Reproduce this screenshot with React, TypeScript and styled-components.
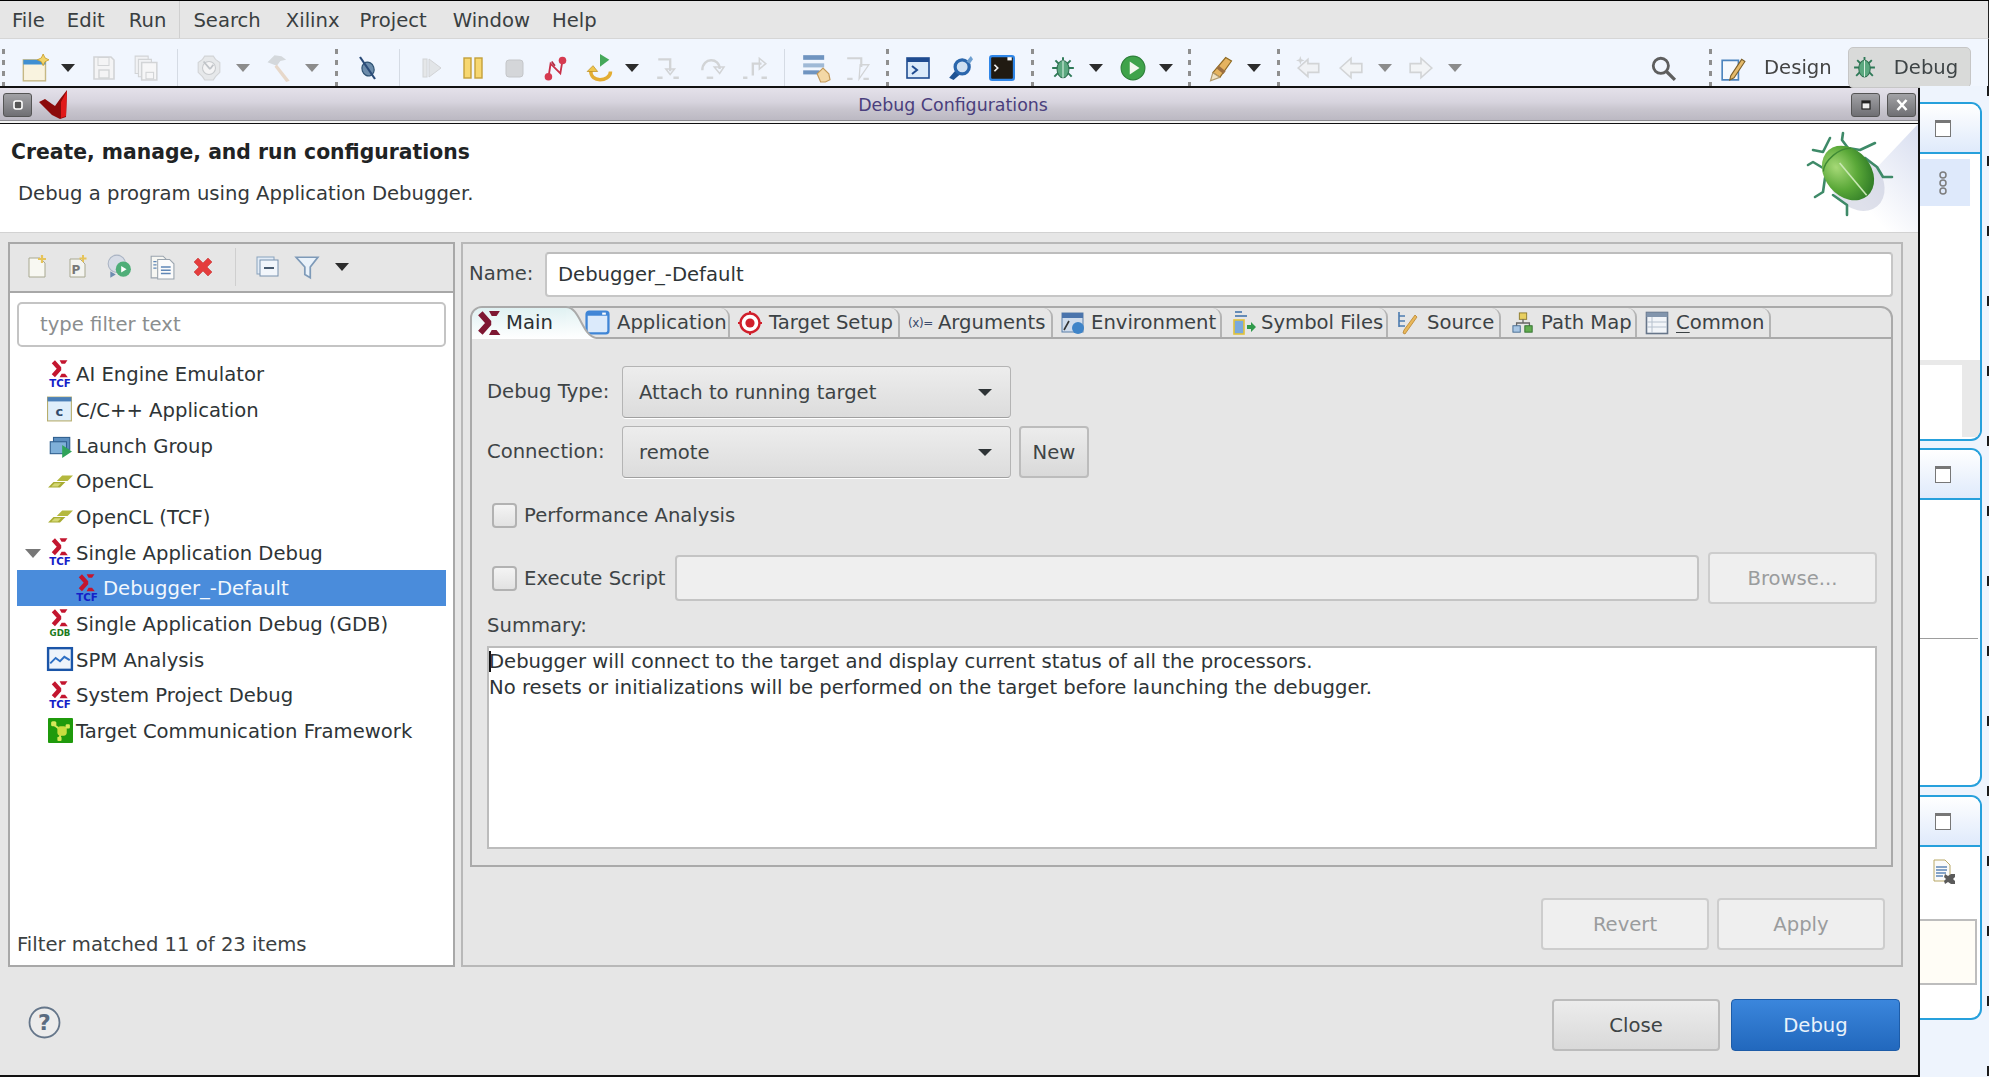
import React from "react";
import styled, { createGlobalStyle } from "styled-components";

const Global = createGlobalStyle`
  html, body { margin: 0; padding: 0; background: #eef4fd; overflow: hidden; }
  #root { width: 1989px; height: 1077px; }
  * { box-sizing: border-box; }
`;

const Page = styled.div`
  width: 1989px; height: 1077px; display: flex; flex-direction: column;
  font-family: "DejaVu Sans", sans-serif; font-size: 19.62px; color: #2e3436;
  border-top: 1px solid #000; overflow: hidden; filter: blur(0.35px);
`;
const MenuBar = styled.div`
  height: 38px; background: #e6e6e6; border-bottom: 1px solid #d6d6d6; padding-top: 2px;
  display: flex; align-items: center; flex: none; border-right: 1px solid #222;
`;
const MenuItem = styled.span<{ $ml: number }>`
  margin-left: ${p => p.$ml}px; color: #3a3f41; white-space: nowrap;
`;
const MenuDivider = styled.div`
  width: 1px; align-self: stretch; background: #d0d0d0; margin-left: 13px; margin-top: -2px;
`;
const ToolBar = styled.div`
  height: 47px; flex: none; background: #f1f6fe; display: flex; align-items: stretch;
  padding-top: 10px; position: relative; border-right: 1px solid #222;
`;
const ToolSlot = styled.div<{ $ml: number; $w: number }>`
  margin-left: ${p => p.$ml}px; width: ${p => p.$w}px; flex: none;
  display: flex; align-items: center; justify-content: center;
`;
const DashSep = styled.div`
  width: 3px; height: 100%;
  background: repeating-linear-gradient(to bottom, #8f8f8f 0 5px, transparent 5px 11px);
`;
const SolidSep = styled.div`
  width: 1px; height: 100%; background: #d5dbe4;
`;
const Arrow = styled.div<{ $light?: boolean }>`
  width: 0; height: 0; border-left: 7px solid transparent; border-right: 7px solid transparent;
  border-top: 8px solid ${p => (p.$light ? "#8c8c8c" : "#2c2c2c")};
`;
const PerspectiveText = styled.span`
  color: #444; margin-left: 18px; white-space: nowrap; align-self: center;
`;
const PerspectiveBtn = styled.div`
  height: 41px; width: 123px; margin-left: 16px; margin-top: -2px; flex: none;
  background: #d9dad9; border: 1px solid #c6c6c6; border-radius: 5px;
  display: flex; align-items: center; padding-left: 3px; color: #3e4446;
  gap: 17px;
`;
const Body = styled.div`
  flex: 1; display: flex; min-height: 0;
`;
const Dialog = styled.div`
  width: 1920px; height: 991px; flex: none; background: #e6e6e6; display: flex; flex-direction: column;
  border-top: 2px solid #111; border-right: 2px solid #111; border-bottom: 2px solid #111;
`;
const TitleBar = styled.div`
  height: 36px; flex: none; display: flex; align-items: center;
  background: linear-gradient(to bottom, #e4e1ea 0, #d7d4de 40%, #c9c6cf 60%, #bcb9c3 90%, #8e8d92 91%, #8e8d92 94%, #f4f4f4 94%, #f4f4f4 100%);
  border-bottom: 1px solid #111; padding: 0 2px 2px 3px;
`;
const WinBtn = styled.div`
  width: 29px; height: 24px; flex: none; border: 1px solid #555; border-radius: 3px;
  background: linear-gradient(to bottom, #a2a2a6, #6f6f73); display: flex; align-items: center; justify-content: center;
`;
const WinTitle = styled.div`
  flex: 1; text-align: center; color: #4a3f7d; font-size: 17.4px; margin-left: -41px; margin-right: -27px;
`;
const HeaderArea = styled.div`
  height: 109px; flex: none; background: #fff; border-bottom: 1px solid #d2d2d2; display: flex;
`;
const HeaderText = styled.div`
  flex: 1; display: flex; flex-direction: column; padding: 15px 0 0 11px;
`;
const HeaderTitle = styled.div`
  font-weight: bold; font-size: 20.35px; color: #1f2324; line-height: 26px; white-space: nowrap;
`;
const HeaderSub = styled.div`
  margin: 16px 0 0 7px; line-height: 26px; color: #33383a; white-space: nowrap;
`;
const Main = styled.div`
  flex: none; display: flex; gap: 6px; padding: 9px 15px 0 8px;
`;
const Sidebar = styled.div`
  width: 447px; height: 725px; flex: none; background: #fff; border: 2px solid #a8a8a8; display: flex; flex-direction: column;
`;
const SideTools = styled.div`
  height: 49px; flex: none; background: #e6e6e6; border-bottom: 2px solid #a8a8a8; display: flex; align-items: center; padding-bottom: 1px;
`;
const SideSep = styled.div`
  width: 1px; height: 38px; background: #cfcfcf; flex: none;
`;
const FilterBox = styled.div`
  margin: 9px 7px 0 7px; height: 45px; flex: none; border: 2px solid #c4c4c4; border-radius: 5px;
  background: #fff; display: flex; align-items: center; padding-left: 21px; color: #8b8e8f;
`;
const Tree = styled.div`
  margin: 9px 7px 0 7px; display: flex; flex-direction: column;
`;
const TreeRow = styled.div<{ $selected?: boolean; $indent?: number }>`
  height: 35.67px; display: flex; align-items: center; white-space: nowrap; padding-top: 2px;
  padding-left: ${p => p.$indent ?? 31}px;
  background: ${p => (p.$selected ? "#4a8cdb" : "transparent")};
  color: ${p => (p.$selected ? "#f2f7fd" : "#2e3436")};
`;
const TreeIcon = styled.div`
  width: 24px; height: 26px; flex: none; margin-right: 4px; margin-top: -2px; display: flex; align-items: center; justify-content: center;
`;
const Twisty = styled.div`
  width: 0; height: 0; border-left: 8px solid transparent; border-right: 8px solid transparent;
  border-top: 9px solid #777; margin-left: -23px; margin-right: 7px; flex: none;
`;
const FilterNote = styled.div`
  margin-top: auto; padding: 0 0 9px 7px; color: #3c4142;
`;
const Editor = styled.div`
  width: 1442px; height: 725px; flex: none; border: 2px solid #b8b8b8; display: flex; flex-direction: column; padding: 8px 8px 0 7px;
`;
const NameRow = styled.div`
  display: flex; align-items: center; gap: 8px; height: 45px; flex: none; color: #3e4446;
`;
const NameLabel = styled.span`
  width: 67px; flex: none; white-space: nowrap; padding-bottom: 2px; margin-left: -1px; margin-right: 1px;
`;
const NameInput = styled.input`
  flex: 1; height: 45px; border: 2px solid #c6c6c6; border-top-color: #bdbdbd; border-radius: 4px; background: #fff;
  font: inherit; color: #2e3436; padding: 0 11px; outline: none;
`;
const Folder = styled.div`
  margin-top: 9px; height: 561px; flex: none; display: flex; flex-direction: column;
`;
const TabStrip = styled.div`
  height: 33px; flex: none; display: flex; border: 2px solid #aaa; border-bottom: 2px solid #aaa; border-radius: 12px 12px 0 0; position: relative;
`;
const Tab = styled.div<{ $w: number; $active?: boolean; $pad?: number }>`
  width: ${p => p.$w}px; flex: none; margin-bottom: ${p => (p.$active ? -2 : 0)}px; display: flex; align-items: center; white-space: nowrap;
  padding-left: ${p => p.$pad ?? 8}px; color: ${p => (p.$active ? "#2b3032" : "#3c4245")}; position: relative;
  border-right: ${p => (p.$active ? "none" : "2px solid #b4b4b4")};
  border-top-right-radius: ${p => (p.$active ? 0 : 9)}px;
  background: ${p => (p.$active ? "linear-gradient(to bottom, #e0f1f2 0, #ffffff 100%)" : "transparent")};
  border-top-left-radius: ${p => (p.$active ? 10 : 0)}px;
  padding-bottom: ${p => (p.$active ? 2 : 0)}px;
  z-index: ${p => (p.$active ? 1 : 0)};
`;
const TabLabel = styled.span<{ $ml: number }>`
  margin-left: ${p => p.$ml}px;
`;
const Under = styled.span`
  text-decoration: underline; text-underline-offset: 3px;
`;
const TabCurve = styled.svg`
  position: absolute; left: 94px; top: -2px; width: 30px; height: 33px;
`;
const VarGlyph = styled.span`
  font-size: 12px; color: #3b4a6a; white-space: nowrap; letter-spacing: -0.4px; margin-left: 1px;
`;
const FolderBody = styled.div`
  flex: 1; border: 2px solid #aaa; border-top: none; padding: 27px 14px 16px 15px; display: flex; flex-direction: column;
`;
const FormRow = styled.div<{ $mt?: number }>`
  display: flex; align-items: center; margin-top: ${p => p.$mt ?? 0}px; flex: none;
`;
const FieldLabel = styled.div`
  width: 135px; flex: none; color: #3e4446; position: relative; top: -1px;
`;
const Select = styled.div`
  width: 389px; height: 52px; flex: none; border: 1px solid #b4b4b4; border-bottom-color: #a0a0a0; border-radius: 4px;
  background: linear-gradient(to bottom, #ededed, #dcdcdc); display: flex; align-items: center; justify-content: space-between;
  padding: 0 18px 0 16px; color: #3e4446; box-shadow: 0 1px 0 #fff;
`;
const Caret = styled.div`
  width: 0; height: 0; border-left: 7px solid transparent; border-right: 7px solid transparent; border-top: 7px solid #2e3436;
`;
const PlainButton = styled.div<{ $w: number; $h: number; $disabled?: boolean }>`
  width: ${p => p.$w}px; height: ${p => p.$h}px; flex: none; border-radius: 4px; display: flex; align-items: center; justify-content: center;
  border: 2px solid ${p => (p.$disabled ? "#cdcdcd" : "#bcbcbc")};
  color: ${p => (p.$disabled ? "#9a9c9d" : "#3e4446")};
  background: ${p => (p.$disabled ? "#efefef" : "linear-gradient(to bottom, #ececec, #d9d9d9)")};
`;
const Check = styled.div`
  width: 25px; height: 25px; flex: none; margin-left: 5px; margin-right: 7px; border: 2px solid #b2b2b2; border-radius: 4px;
  background: linear-gradient(to bottom, #f4f4f4, #e2e2e2);
`;
const CheckText = styled.span`
  color: #3e4446; white-space: nowrap;
`;
const DisabledInput = styled.div`
  flex: 1; height: 46px; margin: 0 9px; border: 2px solid #c4c4c4; border-radius: 4px; background: #efefef;
`;
const SummaryLabel = styled.div`
  margin-top: 9px; height: 26px; line-height: 26px; color: #3e4446; flex: none;
`;
const SummaryBox = styled.div`
  margin-top: 7px; height: 203px; flex: none; background: #fff; border: 2px solid #bcbcbc; padding: 1px 0 0 0;
  line-height: 26px; color: #2e3436; white-space: pre;
`;
const Cursor = styled.span`
  display: inline-block; width: 2px; height: 21px; background: #111; margin-right: -2px; vertical-align: -4px;
`;
const Actions = styled.div`
  display: flex; justify-content: flex-end; gap: 8px; margin-top: 31px; padding-right: 8px; flex: none;
`;
const Footer = styled.div`
  flex: 1; display: flex; align-items: flex-start; padding: 32px 18px 0 28px;
`;
const HelpWrap = styled.div`
  margin-top: 7px; flex: none; width: 33px; height: 33px;
`;
const FooterButtons = styled.div`
  margin-left: auto; display: flex; gap: 11px;
`;
const PrimaryButton = styled.div`
  width: 169px; height: 52px; border-radius: 4px; border: 1px solid #1d5ca8; display: flex; align-items: center; justify-content: center;
  color: #e9f2fb; background: linear-gradient(to bottom, #3b86dc, #2268bd);
`;
const SideStrip = styled.div`
  flex: 1; display: flex; flex-direction: column; padding-top: 16px; position: relative; background: #eef4fd; min-width: 0;
`;
const Rail = styled.div`
  position: absolute; right: 0; top: 0; bottom: 0; width: 2px;
  background: repeating-linear-gradient(to bottom, #1c1c1c 0 10px, transparent 10px 70px);
`;
const ViewPanel = styled.div<{ $h: number; $mb: number }>`
  width: 62px; height: ${p => p.$h}px; margin-bottom: ${p => p.$mb}px; flex: none; background: #fff;
  border: 2px solid #26a0dc; border-left: none; border-radius: 0 11px 11px 0; display: flex; flex-direction: column; overflow: hidden;
`;
const ViewHead = styled.div`
  height: 50px; flex: none; background: linear-gradient(to bottom, #ffffff, #dfeafb); border-bottom: 2px solid #26a0dc;
  display: flex; align-items: center; padding-left: 15px;
`;
const MaxIcon = styled.div`
  width: 16px; height: 17px; border: 1.5px solid #777; border-top-width: 3px; background: #fff;
`;
const TabHint = styled.div`
  margin-top: 5px; height: 47px; width: 50px; flex: none; background: #dee9fb; display: flex; align-items: center; padding-left: 18px;
`;
const Gray = styled.div`
  margin-top: auto; margin-bottom: 2px; height: 77px; flex: none; background: #e9e9e9; padding: 5px 18px 0 0;
`;
const GrayInner = styled.div`
  background: #fff; height: 72px;
`;
const HairLine = styled.div`
  margin-top: 138px; height: 1px; width: 58px; background: #9d9d9d; flex: none;
`;
const FileIconWrap = styled.div`
  margin: 12px 0 0 12px; width: 26px; height: 26px; flex: none;
`;
const NoteBox = styled.div`
  margin-top: 34px; height: 66px; width: 57px; flex: none; background: #fffdf6; border: 2px solid #bdbdbd; border-left: none;
`;

/* ---------- icons ---------- */
type P = { s?: number };
const Svg = styled.svg`
  display: block; flex: none; overflow: visible;
`;
const I = ({ s = 26, children }: { s?: number; children: React.ReactNode }) => (
  <Svg width={s} height={s} viewBox="0 0 24 24">{children}</Svg>
);

const SigmaShape = ({ c }: { c: string }) => (
  <g fill={c}>
    <path d="M4 3l8 9-8 9" fill="none" stroke={c} strokeWidth="5.5" strokeLinejoin="bevel" />
    <path d="M12 1h10l-3 4.5h-4.5z" />
    <path d="M14.5 18.5H19l3.5 4.5H12z" />
  </g>
);
const XilinxMain = ({ s = 26 }: P) => <I s={s}><SigmaShape c="#7e1732" /></I>;
const TagIcon = ({ label, color }: { label: string; color: string }) => (
  <I s={26}>
    <g transform="translate(3 -1.5) scale(0.72)"><SigmaShape c="#c3162f" /></g>
    <text x="12" y="24" textAnchor="middle" fontSize={label === "GDB" ? 8 : 9.5} fontWeight="bold" fontFamily="DejaVu Sans" fill={color}>{label}</text>
  </I>
);
const CApp = () => (
  <I>
    <rect x="0.5" y="1" width="22" height="22" fill="#dfeefb" stroke="#b7ad6b" />
    <rect x="0.5" y="1" width="22" height="4" fill="#4a7fb8" />
    <text x="11.5" y="18" textAnchor="middle" fontSize="12" fontWeight="bold" fontFamily="DejaVu Sans" fill="#324a6a">c</text>
  </I>
);
const LaunchGroup = () => (
  <I>
    <rect x="6" y="5" width="15" height="11" fill="#5c8fc0" stroke="#2f5f8f" />
    <rect x="3" y="9" width="15" height="11" fill="#7fb0d9" stroke="#2f5f8f" />
    <path d="M14 12l9 6-9 6z" fill="#2fa35a" />
  </I>
);
const OpenCL = () => (
  <I>
    <path d="M9 12l5-5h10l-5 5z" fill="#b4b83e" />
    <path d="M1 18l5-5h11l-5 5z" fill="#a8ac32" />
    <path d="M4 17l3-3h6l-3 3z" fill="#d4d774" />
  </I>
);
const Spm = () => (
  <I>
    <rect x="1" y="2" width="22" height="20" fill="#eef4fb" stroke="#1b55a8" strokeWidth="2.2" />
    <path d="M3 16l5-5 4 3 4-4 5 3" fill="none" stroke="#2d6fc4" strokeWidth="1.8" />
  </I>
);
const Tcf = () => (
  <I s={25}>
    <rect x="0" y="0" width="24" height="24" rx="1" fill="#1f9a0c" />
    <path d="M5 6l8 6 6-4M13 12l-2 8" fill="none" stroke="#d7e85a" strokeWidth="1.8" />
    <rect x="3" y="3" width="5" height="5" rx="1.5" fill="#d7e85a" />
    <rect x="9" y="8" width="9" height="9" rx="3" fill="#c8dc40" />
    <rect x="17" y="6" width="4" height="4" rx="1" fill="#d7e85a" />
    <rect x="9" y="18" width="4" height="4" rx="1" fill="#d7e85a" />
  </I>
);
const NewCfg = () => (
  <I s={24}>
    <path d="M4 3h11l5 5v14H4z" fill="#f8f8f2" stroke="#a8a890" />
    <path d="M17 0v8M13 4h8" stroke="#e6c45a" strokeWidth="2.2" />
  </I>
);
const ProtoCfg = () => (
  <I s={24}>
    <path d="M4 4h10l5 5v13H4z" fill="#f4f4f0" stroke="#a8a890" />
    <text x="10" y="19" textAnchor="middle" fontSize="12" fontWeight="bold" fontFamily="DejaVu Sans" fill="#777">P</text>
    <path d="M17 0v7M13.5 3.5h7" stroke="#e6c45a" strokeWidth="2" />
  </I>
);
const ExportCfg = () => (
  <I s={26}>
    <circle cx="10" cy="9" r="8" fill="#d7dce6" stroke="#aab4c4" />
    <path d="M4 22l5-3-5-3z" fill="#6f8db0" />
    <circle cx="16" cy="14" r="7" fill="#4fae78" />
    <path d="M14 11l5 3-5 3z" fill="#fff" />
  </I>
);
const DupCfg = () => (
  <I s={26}>
    <path d="M2 2h11l3 3v17H2z" fill="#f6f6f2" stroke="#9aa4ae" />
    <path d="M8 5h11l4 4v14H8z" fill="#fbfbfb" stroke="#9aa4ae" />
    <path d="M11 12h9M11 15h9M11 18h9M4 7h3M4 10h3M4 13h3" stroke="#5f86b6" strokeWidth="1.3" />
  </I>
);
const DelX = () => (
  <I s={24}>
    <path d="M3 7l4-4 5 5 5-5 4 4-5 5 5 5-4 4-5-5-5 5-4-4 5-5z" fill="#e43d3d" stroke="#c52a2a" strokeWidth="0.5" />
  </I>
);
const Collapse = () => (
  <I s={24}>
    <rect x="2" y="2" width="17" height="17" fill="#e3ecf7" stroke="#8aa3bd" />
    <rect x="5" y="5" width="18" height="16" fill="#f2f6fb" stroke="#7892ae" />
    <path d="M9 13h10" stroke="#4a5c70" strokeWidth="2" />
  </I>
);
const Funnel = () => (
  <I s={26}>
    <path d="M2 3h20l-7 9v10l-5-3v-7z" fill="#eaf2fa" stroke="#7e9ab8" strokeWidth="1.6" />
  </I>
);
const HelpIcon = () => (
  <Svg width={33} height={33} viewBox="0 0 33 33">
    <circle cx="16.5" cy="16.5" r="15" fill="#ececec" stroke="#65768a" strokeWidth="1.8" />
    <text x="16.5" y="24" textAnchor="middle" fontSize="22" fontWeight="bold" fontFamily="DejaVu Sans" fill="#5a6b80">?</text>
  </Svg>
);
const AppTab = () => (
  <I s={25}>
    <rect x="1.5" y="1.5" width="21" height="21" rx="2.5" fill="#dbeafb" stroke="#3f85d6" strokeWidth="2.2" />
    <rect x="2" y="2" width="20" height="3.5" fill="#3f85d6" />
    <rect x="16.5" y="2.5" width="3.5" height="2" fill="#fff" />
  </I>
);
const TargetTab = () => (
  <I s={24}>
    <path d="M12 0v24M0 12h24" stroke="#d01f2b" strokeWidth="2" />
    <circle cx="12" cy="12" r="9.5" fill="#fff" stroke="#d01f2b" strokeWidth="2.4" />
    <circle cx="12" cy="12" r="4.6" fill="#d01f2b" />
  </I>
);
const EnvTab = () => (
  <I s={24}>
    <rect x="1" y="2" width="21" height="19" fill="#cfdcec" stroke="#5a7fa8" />
    <rect x="1" y="2" width="21" height="5" fill="#4a74ac" />
    <path d="M3 19l5-9" stroke="#333" strokeWidth="1.6" />
    <circle cx="17" cy="17" r="6" fill="#3f84c8" />
  </I>
);
const SymbolTab = () => (
  <I s={24}>
    <path d="M3 1h7M3 5h12" stroke="#3a6ea8" strokeWidth="1.6" />
    <rect x="2" y="9" width="10" height="14" fill="#7aa9dc" stroke="#e3c23a" strokeWidth="1.6" />
    <path d="M15 14h4v-3l5 5-5 5v-3h-4z" fill="#2f9a4a" />
  </I>
);
const SourceTab = () => (
  <I s={24}>
    <path d="M3 1v15M3 5h6M3 10h6M3 15h6" stroke="#4d7cb0" strokeWidth="1.6" />
    <path d="M21 6L9 23l-2-1 1-3L19 4z" fill="#e9b85a" stroke="#b98430" strokeWidth="0.8" />
  </I>
);
const PathTab = () => (
  <I s={22}>
    <rect x="8" y="1" width="8" height="7" fill="#e8cf60" stroke="#8c7a2c" />
    <path d="M12 8v4M5 16v-4h14v4" fill="none" stroke="#666" strokeWidth="1.4" />
    <rect x="1" y="15" width="8" height="7" fill="#a8c6e4" stroke="#446a90" />
    <rect x="14" y="15" width="8" height="7" fill="#62ad50" stroke="#2f6f2c" />
  </I>
);
const CommonTab = () => (
  <I s={24}>
    <rect x="1.5" y="1.5" width="21" height="21" fill="#f2f5f9" stroke="#67768a" strokeWidth="1.6" />
    <rect x="1.5" y="1.5" width="21" height="4.5" fill="#8295ad" />
    <path d="M7 6v16M2 11h20M2 16h20" stroke="#b6c1ce" />
  </I>
);

const dis = "#d2d4d6";
const TNew = () => (
  <I s={28}>
    <rect x="2" y="5" width="19" height="18" fill="#f9f3df" stroke="#c6b884" strokeWidth="1.2" />
    <rect x="2" y="5" width="19" height="4" fill="#3f8fd2" />
    <path d="M19 0l1.6 3.4L24 5l-3.4 1.6L19 10l-1.6-3.4L14 5l3.4-1.6z" fill="#f2d46a" stroke="#c79c28" strokeWidth="0.7" />
  </I>
);
const TSave = () => (
  <I s={24}>
    <path d="M2 1h17l3 3v19H2z" fill="#f4f4f5" stroke={dis} strokeWidth="1.6" />
    <rect x="6" y="1.5" width="11" height="8" fill="none" stroke={dis} />
    <rect x="7" y="14" width="10" height="8" fill="none" stroke={dis} strokeWidth="1.4" />
  </I>
);
const TSaveAll = () => (
  <I s={26}>
    <path d="M2 1h12v16H2z" fill="#f1f2f4" stroke={dis} />
    <path d="M5 4h12v16H5z" fill="#f1f2f4" stroke={dis} />
    <path d="M8 7h14v16H8z" fill="#f6f6f7" stroke={dis} strokeWidth="1.4" />
    <rect x="12" y="16" width="7" height="6" fill="none" stroke={dis} />
  </I>
);
const TGear = () => (
  <I s={26}>
    <path d="M8 1h8l2 3 4 3v9l-4 4-2 3H8l-2-3-4-4V7l4-3z" fill="#e6e8ea" stroke={dis} />
    <circle cx="12" cy="12" r="6" fill="#f4f4f5" stroke="#c7cacd" />
    <path d="M7 6l6 7M16 9l-3 4" stroke="#c0c4c8" strokeWidth="1.6" />
  </I>
);
const THammer = () => (
  <I s={28}>
    <path d="M3 7l6-6 6 1 4 3-5 1-3 4-3-1z" fill="#d4d8dc" />
    <path d="M11 9l11 14-3 1L9 11z" fill="#e7d8ca" />
  </I>
);
const TSkip = () => (
  <I s={24}>
    <ellipse cx="12" cy="13" rx="6" ry="7" fill="#6c8cab" stroke="#2f5373" strokeWidth="1.2" transform="rotate(-20 12 13)" />
    <path d="M4 1l15 22" stroke="#2a4b78" strokeWidth="2.2" />
  </I>
);
const TResume = () => (
  <I s={24}>
    <rect x="3" y="3" width="4" height="18" fill="#e5e7e9" stroke={dis} />
    <path d="M9 3l12 9-12 9z" fill="#e2e5e8" stroke={dis} />
  </I>
);
const TPause = () => (
  <I s={24}>
    <rect x="3" y="2" width="7" height="20" fill="#f7d770" stroke="#c3a03a" strokeWidth="1.4" />
    <rect x="14" y="2" width="7" height="20" fill="#f7d770" stroke="#c3a03a" strokeWidth="1.4" />
  </I>
);
const TStop = () => (
  <I s={24}>
    <rect x="3" y="4" width="17" height="17" rx="3" fill="#d4d6d9" stroke="#c4c6c9" />
  </I>
);
const TDisc = () => (
  <I s={26}>
    <path d="M5 21l2-13 9 9 2-12" fill="none" stroke="#c83048" strokeWidth="1.7" />
    <circle cx="5" cy="20" r="3.5" fill="#d63a50" />
    <circle cx="18" cy="5" r="3.5" fill="#d63a50" />
    <path d="M8 6l3 4" stroke="#b02a42" strokeWidth="1.6" />
  </I>
);
const TRestart = () => (
  <I s={28}>
    <path d="M12 0l8 5-8 6z" fill="#45a85a" />
    <path d="M4 14c0 6 4 8 8 8s9-2 9-7" fill="none" stroke="#e3ad33" strokeWidth="3" />
    <path d="M1 15l5-5 4 5z" fill="#f0c64d" stroke="#b98a1c" strokeWidth="0.6" />
  </I>
);
const TStepInto = () => (
  <I s={26}>
    <path d="M3 4h11v11" fill="none" stroke={dis} strokeWidth="2.2" />
    <path d="M10 13l4 5 4-5z" fill="none" stroke={dis} strokeWidth="1.4" />
    <path d="M2 21h5M17 21h5" stroke={dis} strokeWidth="2.2" />
  </I>
);
const TStepOver = () => (
  <I s={26}>
    <path d="M4 14c0-12 16-12 16-1" fill="none" stroke={dis} strokeWidth="2.2" />
    <path d="M15 11l5 6 4-6z" fill="none" stroke={dis} strokeWidth="1.4" />
    <path d="M8 21h6" stroke={dis} strokeWidth="2.2" />
  </I>
);
const TStepRet = () => (
  <I s={26}>
    <path d="M10 19V8h8" fill="none" stroke={dis} strokeWidth="2.2" />
    <path d="M16 3l6 5-6 5z" fill="none" stroke={dis} strokeWidth="1.4" />
    <path d="M1 21h4M18 21h5" stroke={dis} strokeWidth="2.2" />
  </I>
);
const TStack = () => (
  <I s={28}>
    <rect x="1" y="1" width="18" height="4" fill="#6f94c0" />
    <rect x="1" y="8" width="18" height="3.5" fill="#9fb9d6" />
    <rect x="1" y="14" width="14" height="3.5" fill="#6f94c0" />
    <path d="M13 17l5-5 5 5 1 5-4 2h-4z" fill="#f3d8a6" stroke="#c49a5a" />
  </I>
);
const TDrop = () => (
  <I s={26}>
    <path d="M2 3h13v8" fill="none" stroke={dis} strokeWidth="2" />
    <path d="M14 9h8l-9 13z" fill="none" stroke={dis} strokeWidth="1.2" />
    <path d="M2 22h5M17 22h5" stroke={dis} strokeWidth="2" />
  </I>
);
const TConsole = () => (
  <I s={24}>
    <rect x="1" y="2" width="22" height="20" fill="#dbeafa" stroke="#1f4b90" strokeWidth="1.6" />
    <rect x="1" y="2" width="22" height="4" fill="#1f4b90" />
    <path d="M6 10l5 4-5 4" fill="none" stroke="#1f4b90" strokeWidth="2" />
  </I>
);
const TBlueTool = () => (
  <I s={26}>
    <path d="M2 21l7-8 4 4-7 6z" fill="#1f5394" />
    <circle cx="14" cy="11" r="6.5" fill="#cfe0f2" stroke="#2a66ac" strokeWidth="3" />
    <path d="M18 6l4-5 2 3-3 4z" fill="#6e9fd0" />
  </I>
);
const TTerm = () => (
  <I s={26}>
    <rect x="1" y="1" width="22" height="22" rx="2" fill="#201a12" stroke="#2f86e8" strokeWidth="2" />
    <path d="M5 9l3 3-3 3" fill="none" stroke="#f0f0f0" strokeWidth="1.6" />
    <rect x="17" y="2" width="4" height="3" fill="#fff" />
  </I>
);
const BugSmall = ({ s = 26 }: P) => (
  <I s={s}>
    <path d="M5 5l4 4M19 5l-4 4M2 12h6M22 12h-6M4 20l4-4M20 20l-4-4M12 2v3" stroke="#2f7a58" strokeWidth="1.8" />
    <ellipse cx="12" cy="13" rx="5.5" ry="8" fill="#5ba87f" stroke="#2f6f50" />
    <path d="M12 5v16" stroke="#d6efe0" />
  </I>
);
const TRun = () => (
  <I s={26}>
    <circle cx="12" cy="12" r="11" fill="#3fa34a" stroke="#2e7f3a" />
    <path d="M9 6l9 6-9 6z" fill="#f2f8ee" />
  </I>
);
const TExt = () => (
  <I s={28}>
    <path d="M5 16L16 3l5 3-10 14z" fill="#e5b35f" stroke="#8f6a22" />
    <path d="M3 23l2-7 6 4z" fill="#f0e2c3" stroke="#b19a6c" />
    <path d="M9 11l6 5" stroke="#9c6f40" strokeWidth="3" />
  </I>
);
const TBackEdit = () => (
  <I s={26}>
    <path d="M2 12l9-8v4h10v8H11v4z" fill="#f0f2f5" stroke={dis} strokeWidth="1.5" />
    <path d="M4 1l1 3 3 1-3 1-1 3-1-3-3-1 3-1z" fill={dis} />
  </I>
);
const TBack = () => (
  <I s={26}><path d="M2 12l10-9v5h10v8H12v5z" fill="#f2f4f6" stroke={dis} strokeWidth="1.5" /></I>
);
const TFwd = () => (
  <I s={26}><path d="M22 12L12 3v5H2v8h10v5z" fill="#f2f4f6" stroke={dis} strokeWidth="1.5" /></I>
);
const TSearch = () => (
  <I s={26}>
    <circle cx="10" cy="10" r="7" fill="none" stroke="#5e5e5e" strokeWidth="2.6" />
    <path d="M15 15l8 8" stroke="#5e5e5e" strokeWidth="3" />
  </I>
);
const TDesign = () => (
  <I s={26}>
    <path d="M2 5h15v18H2z" fill="#f6f9fd" stroke="#4c84bd" strokeWidth="1.5" />
    <path d="M10 19L20 4l3 2-10 15-4 2z" fill="#e5ba6a" stroke="#7b5f2a" />
  </I>
);
const TitleLogo = () => (
  <Svg width={30} height={30} viewBox="0 0 30 30">
    <path d="M0 12l6-3 7 5 3 2 5-7 7-9-1 27-6 2-8-4z" fill="#8c0a0a" />
    <path d="M22 12l6-11-1 25-5 2z" fill="#e01a1a" />
  </Svg>
);
const MinBtnGlyph = () => (
  <Svg width={12} height={12} viewBox="0 0 12 12">
    <rect x="2" y="2" width="8" height="8" rx="2" fill="#555" stroke="#fff" strokeWidth="1.6" />
  </Svg>
);
const MaxBtnGlyph = () => (
  <Svg width={12} height={12} viewBox="0 0 12 12">
    <rect x="2" y="2" width="8" height="8" fill="#eee" stroke="#222" strokeWidth="1.2" />
    <rect x="2" y="2" width="8" height="2.4" fill="#222" />
  </Svg>
);
const CloseBtnGlyph = () => (
  <Svg width={14} height={14} viewBox="0 0 14 14">
    <path d="M2.5 2l9 10M11.5 2l-9 10" stroke="#fff" strokeWidth="2.6" />
  </Svg>
);
const FileX = () => (
  <Svg width={26} height={26} viewBox="0 0 26 26">
    <path d="M2 1h11l5 5v16H2z" fill="#fafafa" stroke="#b9a866" />
    <path d="M4 8h11M4 11h11M4 14h10M4 17h7" stroke="#5f86b6" strokeWidth="1.3" />
    <path d="M13 15l3 2 3-2 4 0 0 3-2 2 2 2 0 3-4 0-3-2-3 2-1-3 2-2-2-2z" fill="#5a5a5a" />
  </Svg>
);
const Dots = () => (
  <Svg width={10} height={24} viewBox="0 0 10 24">
    <circle cx="5" cy="4" r="3" fill="none" stroke="#7d7d7d" strokeWidth="1.5" />
    <circle cx="5" cy="12" r="3" fill="none" stroke="#7d7d7d" strokeWidth="1.5" />
    <circle cx="5" cy="20" r="3" fill="none" stroke="#7d7d7d" strokeWidth="1.5" />
  </Svg>
);
const BeetleArt = () => (
  <Svg width={118} height={108} viewBox="0 0 118 108">
    <defs>
      <linearGradient id="wash" x1="0" y1="1" x2="1" y2="0">
        <stop offset="0.35" stopColor="#ffffff" />
        <stop offset="1" stopColor="#d8def0" />
      </linearGradient>
      <radialGradient id="shell" cx="0.38" cy="0.3" r="0.75">
        <stop offset="0" stopColor="#a6d977" />
        <stop offset="0.55" stopColor="#5aa838" />
        <stop offset="1" stopColor="#2e7a26" />
      </radialGradient>
    </defs>
    <path d="M118 0v108H16z" fill="url(#wash)" />
    <ellipse cx="56" cy="57" rx="25" ry="33" fill="#b8bdd2" opacity="0.45" transform="rotate(-40 56 57)" />
    <g fill="none" stroke="#3e8a68" strokeWidth="2.6" strokeLinecap="round" strokeLinejoin="round">
      <path d="M13 26l10 2 7-14" />
      <path d="M43 9l-1 7 6 8" />
      <path d="M48 24l12 2 15-7" />
      <path d="M65 34l12 9 6 10 9 0" />
      <path d="M23 44l-10-6-5 3" />
      <path d="M25 54l-2 14-8 5" />
      <path d="M33 71l14 10 0 10" />
    </g>
    <g transform="rotate(-40 48 49)">
      <ellipse cx="48" cy="49" rx="23" ry="30" fill="url(#shell)" />
      <path d="M30 32c8-8 28-8 36 0" fill="none" stroke="#3f8a34" strokeWidth="1.4" />
      <path d="M48 36v42" stroke="#c9e8b4" strokeWidth="1.6" />
    </g>
  </Svg>
);

/* ---------- toolbar layout data ---------- */
type Item = { c: number; w: number; node: React.ReactNode };
const dash = <DashSep />;
const solid = <SolidSep />;
const dark = <Arrow />;
const light = <Arrow $light />;
const toolbarItems: Item[] = [
  { c: 3, w: 3, node: dash },
  { c: 35, w: 28, node: <TNew /> },
  { c: 68, w: 14, node: dark },
  { c: 104, w: 24, node: <TSave /> },
  { c: 146, w: 26, node: <TSaveAll /> },
  { c: 177, w: 1, node: solid },
  { c: 209, w: 26, node: <TGear /> },
  { c: 243, w: 14, node: light },
  { c: 278, w: 28, node: <THammer /> },
  { c: 312, w: 14, node: light },
  { c: 336, w: 3, node: dash },
  { c: 368, w: 24, node: <TSkip /> },
  { c: 399, w: 1, node: solid },
  { c: 432, w: 24, node: <TResume /> },
  { c: 473, w: 24, node: <TPause /> },
  { c: 515, w: 24, node: <TStop /> },
  { c: 556, w: 26, node: <TDisc /> },
  { c: 600, w: 28, node: <TRestart /> },
  { c: 632, w: 14, node: dark },
  { c: 668, w: 26, node: <TStepInto /> },
  { c: 711, w: 26, node: <TStepOver /> },
  { c: 755, w: 26, node: <TStepRet /> },
  { c: 784, w: 1, node: solid },
  { c: 816, w: 28, node: <TStack /> },
  { c: 858, w: 26, node: <TDrop /> },
  { c: 887, w: 3, node: dash },
  { c: 918, w: 24, node: <TConsole /> },
  { c: 960, w: 26, node: <TBlueTool /> },
  { c: 1002, w: 26, node: <TTerm /> },
  { c: 1032, w: 3, node: dash },
  { c: 1063, w: 26, node: <BugSmall /> },
  { c: 1096, w: 14, node: dark },
  { c: 1133, w: 26, node: <TRun /> },
  { c: 1166, w: 14, node: dark },
  { c: 1189, w: 3, node: dash },
  { c: 1221, w: 28, node: <TExt /> },
  { c: 1254, w: 14, node: dark },
  { c: 1278, w: 3, node: dash },
  { c: 1309, w: 26, node: <TBackEdit /> },
  { c: 1351, w: 26, node: <TBack /> },
  { c: 1385, w: 14, node: light },
  { c: 1421, w: 26, node: <TFwd /> },
  { c: 1455, w: 14, node: light },
  { c: 1663, w: 26, node: <TSearch /> },
  { c: 1710, w: 3, node: dash },
  { c: 1733, w: 26, node: <TDesign /> },
];

const sideItems: Item[] = [
  { c: 27, w: 24, node: <NewCfg /> },
  { c: 68, w: 24, node: <ProtoCfg /> },
  { c: 109, w: 26, node: <ExportCfg /> },
  { c: 152, w: 26, node: <DupCfg /> },
  { c: 193, w: 24, node: <DelX /> },
  { c: 225, w: 1, node: <SideSep /> },
  { c: 257, w: 24, node: <Collapse /> },
  { c: 297, w: 26, node: <Funnel /> },
  { c: 332, w: 14, node: dark },
];

const Slots = ({ items }: { items: Item[] }) => {
  let right = 0;
  return (
    <>
      {items.map((it, i) => {
        const left = it.c - it.w / 2;
        const ml = left - right;
        right = left + it.w;
        return <ToolSlot key={i} $ml={ml} $w={it.w}>{it.node}</ToolSlot>;
      })}
    </>
  );
};

const menus: [string, number][] = [["Edit", 22], ["Run", 24]];
const menus2: [string, number][] = [["Search", 13], ["Xilinx", 25], ["Project", 20], ["Window", 26], ["Help", 22]];

const tree = [
  { label: "AI Engine Emulator", icon: <TagIcon label="TCF" color="#1420c8" /> },
  { label: "C/C++ Application", icon: <CApp /> },
  { label: "Launch Group", icon: <LaunchGroup /> },
  { label: "OpenCL", icon: <OpenCL /> },
  { label: "OpenCL (TCF)", icon: <OpenCL /> },
  { label: "Single Application Debug", icon: <TagIcon label="TCF" color="#1420c8" />, twisty: true },
  { label: "Debugger_-Default", icon: <TagIcon label="TCF" color="#1420c8" />, selected: true },
  { label: "Single Application Debug (GDB)", icon: <TagIcon label="GDB" color="#1a7a1a" /> },
  { label: "SPM Analysis", icon: <Spm /> },
  { label: "System Project Debug", icon: <TagIcon label="TCF" color="#1420c8" /> },
  { label: "Target Communication Framework", icon: <Tcf /> },
];

export default function App() {
  return (
    <Page>
      <Global />
      <MenuBar>
        <MenuItem $ml={12}>File</MenuItem>
        {menus.map(([m, ml]) => <MenuItem key={m} $ml={ml}>{m}</MenuItem>)}
        <MenuDivider />
        {menus2.map(([m, ml]) => <MenuItem key={m} $ml={ml}>{m}</MenuItem>)}
      </MenuBar>
      <ToolBar>
        <Slots items={toolbarItems} />
        <PerspectiveText>Design</PerspectiveText>
        <PerspectiveBtn>
          <BugSmall s={25} />
          <span>Debug</span>
        </PerspectiveBtn>
      </ToolBar>
      <Body>
        <Dialog>
          <TitleBar>
            <WinBtn><MinBtnGlyph /></WinBtn>
            <ToolSlot $ml={7} $w={30}><TitleLogo /></ToolSlot>
            <WinTitle>Debug Configurations</WinTitle>
            <WinBtn><MaxBtnGlyph /></WinBtn>
            <ToolSlot $ml={7} $w={29}><WinBtn><CloseBtnGlyph /></WinBtn></ToolSlot>
          </TitleBar>
          <HeaderArea>
            <HeaderText>
              <HeaderTitle>Create, manage, and run configurations</HeaderTitle>
              <HeaderSub>Debug a program using Application Debugger.</HeaderSub>
            </HeaderText>
            <BeetleArt />
          </HeaderArea>
          <Main>
            <Sidebar>
              <SideTools>
                <Slots items={sideItems} />
              </SideTools>
              <FilterBox>type filter text</FilterBox>
              <Tree>
                {tree.map(r => (
                  <TreeRow key={r.label} $selected={r.selected} $indent={r.selected ? 58 : 31}>
                    {r.twisty && <Twisty />}
                    <TreeIcon>{r.icon}</TreeIcon>
                    {r.label}
                  </TreeRow>
                ))}
              </Tree>
              <FilterNote>Filter matched 11 of 23 items</FilterNote>
            </Sidebar>
            <Editor>
              <NameRow>
                <NameLabel>Name:</NameLabel>
                <NameInput readOnly value="Debugger_-Default" />
              </NameRow>
              <Folder>
                <TabStrip>
                  <Tab $w={94} $active $pad={4}>
                    <XilinxMain />
                    <TabLabel $ml={4}>Main</TabLabel>
                    <TabCurve viewBox="0 0 30 33" preserveAspectRatio="none">
                      <defs>
                        <linearGradient id="tabfill" x1="0" y1="0" x2="0" y2="1">
                          <stop offset="0" stopColor="#e0f1f2" />
                          <stop offset="1" stopColor="#ffffff" />
                        </linearGradient>
                      </defs>
                      <path d="M0 0C14 0 16 31 30 31V33H0z" fill="url(#tabfill)" />
                      <path d="M0 1C14 1 16 30 30 32" fill="none" stroke="#aaa" strokeWidth="2" />
                    </TabCurve>
                  </Tab>
                  <Tab $w={164} $pad={19}><AppTab /><TabLabel $ml={7}>Application</TabLabel></Tab>
                  <Tab $w={170} $pad={8}><TargetTab /><TabLabel $ml={7}>Target Setup</TabLabel></Tab>
                  <Tab $w={153} $pad={7}><VarGlyph>(x)=</VarGlyph><TabLabel $ml={5}>Arguments</TabLabel></Tab>
                  <Tab $w={169} $pad={8}><EnvTab /><TabLabel $ml={6}>Environment</TabLabel></Tab>
                  <Tab $w={166} $pad={10}><SymbolTab /><TabLabel $ml={5}>Symbol Files</TabLabel></Tab>
                  <Tab $w={113} $pad={8}><SourceTab /><TabLabel $ml={7}>Source</TabLabel></Tab>
                  <Tab $w={136} $pad={11}><PathTab /><TabLabel $ml={7}>Path Map</TabLabel></Tab>
                  <Tab $w={134} $pad={8}><CommonTab /><TabLabel $ml={7}><Under>C</Under>ommon</TabLabel></Tab>
                </TabStrip>
                <FolderBody>
                  <FormRow>
                    <FieldLabel>Debug Type:</FieldLabel>
                    <Select>Attach to running target<Caret /></Select>
                  </FormRow>
                  <FormRow $mt={8}>
                    <FieldLabel>Connection:</FieldLabel>
                    <Select>remote<Caret /></Select>
                    <ToolSlot $ml={8} $w={70}><PlainButton $w={70} $h={52}>New</PlainButton></ToolSlot>
                  </FormRow>
                  <FormRow $mt={25}>
                    <Check />
                    <CheckText>Performance Analysis</CheckText>
                  </FormRow>
                  <FormRow $mt={24}>
                    <Check />
                    <CheckText>Execute Script</CheckText>
                    <DisabledInput />
                    <PlainButton $w={169} $h={52} $disabled>Browse...</PlainButton>
                  </FormRow>
                  <SummaryLabel>Summary:</SummaryLabel>
                  <SummaryBox>
                    <Cursor />{"Debugger will connect to the target and display current status of all the processors.\nNo resets or initializations will be performed on the target before launching the debugger."}
                  </SummaryBox>
                </FolderBody>
              </Folder>
              <Actions>
                <PlainButton $w={168} $h={52} $disabled>Revert</PlainButton>
                <PlainButton $w={168} $h={52} $disabled>Apply</PlainButton>
              </Actions>
            </Editor>
          </Main>
          <Footer>
            <HelpWrap><HelpIcon /></HelpWrap>
            <FooterButtons>
              <PlainButton $w={168} $h={52}>Close</PlainButton>
              <PrimaryButton>Debug</PrimaryButton>
            </FooterButtons>
          </Footer>
        </Dialog>
        <SideStrip>
          <Rail />
          <ViewPanel $h={339} $mb={7}>
            <ViewHead><MaxIcon /></ViewHead>
            <TabHint><Dots /></TabHint>
            <Gray><GrayInner /></Gray>
          </ViewPanel>
          <ViewPanel $h={339} $mb={8}>
            <ViewHead><MaxIcon /></ViewHead>
            <HairLine />
          </ViewPanel>
          <ViewPanel $h={225} $mb={0}>
            <ViewHead><MaxIcon /></ViewHead>
            <FileIconWrap><FileX /></FileIconWrap>
            <NoteBox />
          </ViewPanel>
        </SideStrip>
      </Body>
    </Page>
  );
}
